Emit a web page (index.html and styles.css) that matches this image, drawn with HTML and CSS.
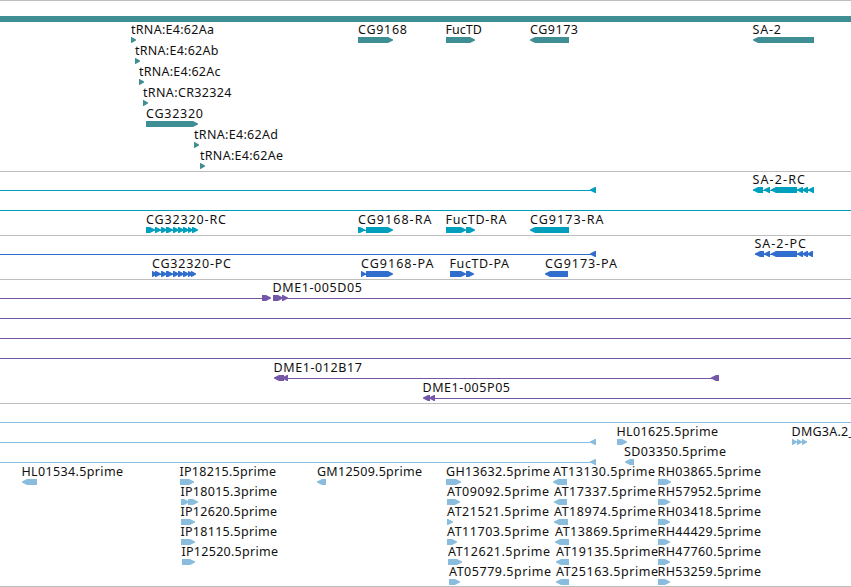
FILE: index.html
```html
<!DOCTYPE html>
<html lang="en">
<head>
    <meta charset="UTF-8">
    <meta name="viewport" content="width=device-width, initial-scale=1.0">
    <title>Genome Browser</title>
    <link rel="stylesheet" href="styles.css">
</head>
<body>
<div class="browser" id="browser"></div>
<script src="script.js"></script>
</body>
</html>
```

FILE: styles.css
```css
body {
    margin: 0;
    padding: 0;
    background-color: #fff;
    overflow: hidden;
}

.browser {
    display: flex;
    flex-direction: column;
    width: 851px;
    border-bottom: 1px solid #bebebe;
}

.track {
    border-top: 1px solid #bebebe;
}

.track svg {
    display: block;
    overflow: hidden;
}

.label {
    font-family: "Noto Sans", "Open Sans", sans-serif;
    font-size: 12.5px;
    fill: #111;
}

.genes {
    color: #3e8e94;
}

.transcripts {
    color: #009fbd;
}

.proteins {
    color: #316dcc;
}

.clones {
    color: #7656a6;
}

.ests {
    color: #89bcdd;
}

.feature,
.intron {
    fill: currentColor;
}

.intron {
    shape-rendering: crispEdges;
}
```

FILE: script.js
```js
// top and height are in canvas pixels, y is the top edge of a row of features
// line: [start, end, y]
// item: [y, label, label start, label end, direction, [start, end], ...]
const tracks = [
    {
        name: "genes", top: 1, height: 170,
        bar: [16, 6],
        lines: [],
        items: [
            [37, "tRNA:E4:62Aa", 131, 214, 1, [131, 136]],
            [58, "tRNA:E4:62Ab", 135, 218.5, 1, [135, 140]],
            [79, "tRNA:E4:62Ac", 139, 220.5, 1, [139, 144]],
            [100, "tRNA:CR32324", 143, 231.5, 1, [143, 148]],
            [121, "CG32320", 146, 203, 1, [146, 198]],
            [142, "tRNA:E4:62Ad", 194, 278, 1, [194, 199]],
            [163, "tRNA:E4:62Ae", 200, 283, 1, [200, 205]],
            [37, "CG9168", 358, 407, 1, [358, 393]],
            [37, "FucTD", 445.5, 482, 1, [446, 475]],
            [37, "CG9173", 530, 578, -1, [530, 569]],
            [37, "SA-2", 752.5, 781, -1, [753, 814]]
        ]
    },
    {
        name: "transcripts", top: 172, height: 63,
        lines: [[0, 592, 187], [0, 851, 207], [753, 812, 187], [146, 196, 227], [358, 368, 227]],
        items: [
            [187, "", 0, 0, -1, [590, 596]],
            [187, "SA-2-RC", 752.5, 805, -1, [753, 763], [764, 770], [771, 797], [797, 803], [802, 808], [808, 814]],
            [227, "CG32320-RC", 146, 226, 1, [146, 155], [155, 161], [161, 167], [166, 173], [173, 179], [178, 184], [183, 189], [188, 193], [192, 198]],
            [227, "CG9168-RA", 358, 431.5, 1, [358, 365], [366, 393]],
            [227, "FucTD-RA", 445.5, 506.5, 1, [446, 466], [466, 475]],
            [227, "CG9173-RA", 530, 603.5, -1, [530, 569]]
        ]
    },
    {
        name: "proteins", top: 236, height: 43,
        lines: [[0, 592, 251], [755, 812, 251], [152, 194, 271], [361, 368, 271]],
        items: [
            [251, "", 0, 0, -1, [590, 596]],
            [251, "SA-2-PC", 754.5, 806, -1, [755, 764], [764, 770], [771, 797], [797, 803], [802, 808], [807, 813]],
            [271, "CG32320-PC", 152, 231, 1, [152, 157], [155, 161], [161, 167], [166, 173], [173, 179], [178, 184], [183, 189], [188, 193], [191, 196]],
            [271, "CG9168-PA", 361, 433.5, 1, [361, 366], [366, 393]],
            [271, "FucTD-PA", 449.5, 509, 1, [450, 466], [466, 474]],
            [271, "CG9173-PA", 545, 617, -1, [545, 568]]
        ]
    },
    {
        name: "clones", top: 280, height: 123,
        lines: [
            [0, 262, 295], [285, 851, 295], [0, 851, 315], [0, 851, 335], [0, 851, 355],
            [286, 715, 375], [432, 851, 395]
        ],
        items: [
            [295, "", 0, 0, 1, [262, 271]],
            [295, "DME1-005D05", 272.5, 362, 1, [273, 283], [282, 288]],
            [375, "DME1-012B17", 273.5, 362, -1, [274, 284], [282, 288]],
            [375, "", 0, 0, -1, [711, 719]],
            [395, "DME1-005P05", 422.5, 510, -1, [423, 430], [429, 435]]
        ]
    },
    {
        name: "ests", top: 404, height: 182,
        lines: [[0, 851, 419], [0, 592, 439], [0, 592, 459]],
        items: [
            [439, "", 0, 0, -1, [590, 596]],
            [459, "", 0, 0, -1, [590, 596]],
            [439, "HL01625.5prime", 616.5, 718, 1, [617, 627]],
            [439, "DMG3A.2_", 791.5, 854, 1, [792, 797], [797, 802], [802, 807]],
            [459, "SD03350.5prime", 624, 726, -1, [625, 634]],
            [479, "HL01534.5prime", 21.5, 123, -1, [22, 37]],
            [479, "IP18215.5prime", 179.5, 276, 1, [180, 194]],
            [499, "IP18015.3prime", 180.5, 277, 1, [181, 189], [188, 198]],
            [519, "IP12620.5prime", 180.5, 277, 1, [181, 195]],
            [539, "IP18115.5prime", 180.5, 277, 1, [181, 195]],
            [559, "IP12520.5prime", 181.5, 278, 1, [182, 195]],
            [479, "GM12509.5prime", 317, 422, -1, [317, 326]],
            [479, "GH13632.5prime", 446, 550, 1, [446, 461]],
            [499, "AT09092.5prime", 447, 549, 1, [447, 460]],
            [519, "AT21521.5prime", 447, 549, 1, [447, 453]],
            [539, "AT11703.5prime", 447, 549, 1, [447, 457]],
            [559, "AT12621.5prime", 448, 550, 1, [448, 462]],
            [579, "AT05779.5prime", 449, 551, 1, [449, 460]],
            [479, "AT13130.5prime", 553, 655, -1, [553, 567]],
            [499, "AT17337.5prime", 554, 656, -1, [554, 567]],
            [519, "AT18974.5prime", 554, 656, -1, [554, 568]],
            [539, "AT13869.5prime", 555, 657, -1, [555, 569]],
            [559, "AT19135.5prime", 556, 658, -1, [556, 569]],
            [579, "AT25163.5prime", 556, 658, -1, [556, 569]],
            [479, "RH03865.5prime", 657.5, 761, 1, [658, 671]],
            [499, "RH57952.5prime", 657.5, 761, 1, [658, 670]],
            [519, "RH03418.5prime", 657.5, 761, 1, [658, 670]],
            [539, "RH44429.5prime", 657.5, 761, 1, [658, 670]],
            [559, "RH47760.5prime", 657.5, 761, 1, [658, 670]],
            [579, "RH53259.5prime", 657.5, 761, 1, [658, 670]]
        ]
    }
];

// block with a pointed end on the side it is read towards
function arrow(start, end, y, dir) {
    const tip = Math.min(5, end - start - 0.5);
    const back = dir > 0 ? start : end;
    const point = dir > 0 ? end : start;
    const neck = point - dir * tip;
    const mid = point - dir * tip * 0.4;
    return `<polygon class="feature" points="${back},${y} ${neck},${y} ${mid},${y + 1.5} ${point},${y + 2.5} ${point},${y + 3.5} ${mid},${y + 4.5} ${neck},${y + 6} ${back},${y + 6}"/>`;
}

function drawTrack(track) {
    let svg = "";
    if (track.bar) {
        svg += `<rect class="feature" x="0" y="${track.bar[0]}" width="851" height="${track.bar[1]}"/>`;
    }
    track.lines.forEach(([start, end, y]) => {
        svg += `<rect class="intron" x="${start}" y="${y + 3}" width="${end - start}" height="1"/>`;
    });
    track.items.forEach(([y, label, from, to, dir, ...blocks]) => {
        blocks.forEach(([start, end]) => {
            svg += arrow(start, end, y, dir);
        });
        if (label) {
            svg += `<text class="label" x="${from}" y="${y - 3}" textLength="${to - from}">${label}</text>`;
        }
    });
    return `<div class="track ${track.name}"><svg width="851" height="${track.height}" viewBox="0 ${track.top} 851 ${track.height}">${svg}</svg></div>`;
}

document.getElementById("browser").innerHTML = tracks.map(drawTrack).join("");
```
